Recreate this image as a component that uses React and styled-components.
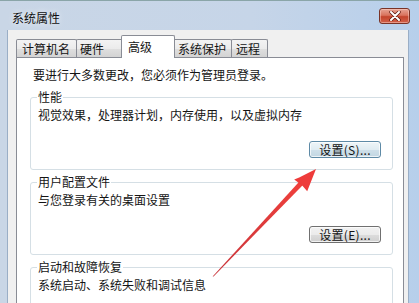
import React from 'react'
import styled, { createGlobalStyle } from 'styled-components'

const GlobalStyle = createGlobalStyle`
  html, body {
    margin: 0;
    padding: 0;
    overflow: hidden;
    background: #c6d5e7;
  }
  * {
    box-sizing: border-box;
  }
`

const FONT = '"Noto Sans CJK SC", "Noto Sans", sans-serif'

const tabs = [
  { label: '计算机名', width: 61, pad: 5 },
  { label: '硬件', width: 48, pad: 3 },
  { label: '高级', width: 54, pad: 6, selected: true },
  { label: '系统保护', width: 59, pad: 4 },
  { label: '远程', width: 37, pad: 4 },
]

const groups = [
  { title: '性能', text: '视觉效果，处理器计划，内存使用，以及虚拟内存', button: '设置(S)...', focused: true },
  { title: '用户配置文件', text: '与您登录有关的桌面设置', button: '设置(E)...' },
  { title: '启动和故障恢复', text: '系统启动、系统失败和调试信息' },
]

const App = () => {
  return (
    <>
      <GlobalStyle />
      <Window>
        <TitleBar>
          <Title>系统属性</Title>
          <CloseButton>
            <svg width='12' height='10' viewBox='0 0 12 10'>
              <path d='M2 1 L10 9 M10 1 L2 9' stroke='#5a1a10' strokeWidth='3.4' strokeLinecap='round' />
              <path d='M2 1 L10 9 M10 1 L2 9' stroke='#ffffff' strokeWidth='2' strokeLinecap='round' />
            </svg>
          </CloseButton>
        </TitleBar>
        <Body>
          <TabRow>
            {tabs.map((t) => (
              <Tab key={t.label} $width={t.width} $pad={t.pad} $selected={t.selected}>
                {t.label}
              </Tab>
            ))}
          </TabRow>
          <Panel>
            <Intro>要进行大多数更改，您必须作为管理员登录。</Intro>
            {groups.map((g) => (
              <Group key={g.title}>
                <Legend>{g.title}</Legend>
                <Desc>{g.text}</Desc>
                {g.button && (
                  <ButtonRow>
                    <Button $focused={g.focused}>{g.button}</Button>
                  </ButtonRow>
                )}
              </Group>
            ))}
          </Panel>
        </Body>
        <ArrowLayer width='419' height='303' viewBox='0 0 419 303'>
          <defs>
            <linearGradient id='arrowFill' x1='0' y1='1' x2='1' y2='0'>
              <stop offset='0' stopColor='#c8343a' />
              <stop offset='1' stopColor='#f0403c' />
            </linearGradient>
          </defs>
          <polygon points='212.6,275.4 213.6,275.6 303.4,183.4 299.6,180.2' fill='url(#arrowFill)' />
          <polygon points='316,168 307.2,190.2 302.2,184.4 294.2,178.6 299.2,176.4' fill='#ee3b3a' />
        </ArrowLayer>
      </Window>
    </>
  )
}

const Window = styled.div`
  position: relative;
  width: 419px;
  height: 303px;
  display: flex;
  flex-direction: column;
  overflow: hidden;
  font-family: ${FONT};
  font-size: 12px;
  color: #141414;
  border-top: 1px solid #8aa5a8;
  background: linear-gradient(to right, #c9d6e6 0%, #c6d5e8 60%, #b7cfeb 100%);
`

const TitleBar = styled.div`
  height: 29px;
  flex: none;
  display: flex;
  align-items: center;
  justify-content: space-between;
  padding: 2px 9px 0 12px;
`

const Title = styled.span`
  line-height: 14px;
  color: #101010;
  text-shadow: 0 0 6px rgba(255, 255, 255, 0.9);
  margin-top: 3px;
`

const CloseButton = styled.div`
  width: 31px;
  height: 16px;
  margin-top: -2px;
  border: 1px solid #7a3326;
  border-radius: 3px;
  display: flex;
  align-items: center;
  justify-content: center;
  background: linear-gradient(#e6a394 0%, #d9735d 45%, #c3442c 55%, #d2614a 100%);
  box-shadow: inset 0 0 0 1px rgba(255, 220, 210, 0.45);
`

const Body = styled.div`
  flex: 1;
  display: flex;
  flex-direction: column;
  margin: 0 10px 0 7px;
  padding: 5px 4px 0 8px;
  background: #f0f0f0;
  border-left: 1px solid #9aaec6;
  border-right: 1px solid #9aaec6;
`

const TabRow = styled.div`
  display: flex;
  align-items: flex-end;
  height: 23px;
  margin-bottom: -1px;
`

const Tab = styled.div`
  width: ${(p) => p.$width}px;
  height: ${(p) => (p.$selected ? 23 : 19)}px;
  margin-left: ${(p) => (p.$selected ? -3 : -1)}px;
  margin-right: ${(p) => (p.$selected ? -1 : 0)}px;
  padding: ${(p) => (p.$selected ? 4 : 2)}px 0 0 ${(p) => p.$pad}px;
  line-height: 14px;
  white-space: nowrap;
  border: 1px solid #898c95;
  border-bottom: none;
  border-radius: 2px 2px 0 0;
  background: ${(p) =>
    p.$selected ? '#ffffff' : 'linear-gradient(#f3f3f3 0%, #ebebeb 50%, #dedede 51%, #d2d2d2 100%)'};
  position: ${(p) => (p.$selected ? 'relative' : 'static')};
  z-index: ${(p) => (p.$selected ? 1 : 'auto')};

  &:first-child {
    margin-left: 0;
  }
`

const Panel = styled.div`
  flex: 1;
  background: #ffffff;
  border: 1px solid #898c95;
  border-bottom: none;
  padding: 8px 10px 0 13px;
`

const Intro = styled.div`
  line-height: 18px;
  padding-left: 3px;
  white-space: nowrap;
`

const Group = styled.fieldset`
  margin: 6px 0 0;
  padding: 0 11px 11px 6px;
  border: 1px solid #d5dfe5;
  border-radius: 3px;
  box-shadow: inset 1px 1px 0 #ffffff;

  & + & {
    margin-top: 5px;
  }
`

const Legend = styled.legend`
  padding: 0 1px;
  line-height: 14px;
  color: #141414;
`

const Desc = styled.div`
  margin-top: 2px;
  padding-left: 1px;
  line-height: 18px;
  white-space: nowrap;
`

const ButtonRow = styled.div`
  display: flex;
  justify-content: flex-end;
  margin-top: 17px;
`

const Button = styled.div`
  width: 72px;
  height: 17px;
  display: flex;
  align-items: center;
  justify-content: center;
  line-height: 14px;
  letter-spacing: 0.3px;
  border: 1px solid ${(p) => (p.$focused ? '#5e8aa6' : '#707070')};
  border-radius: 3px;
  background: ${(p) =>
    p.$focused
      ? 'linear-gradient(#eef5f8 0%, #e0ecf2 50%, #cfe0ea 51%, #c2d6e2 100%)'
      : 'linear-gradient(#f2f2f2 0%, #ebebeb 50%, #dddddd 51%, #cfcfcf 100%)'};
  box-shadow: inset 0 0 0 1px rgba(255, 255, 255, 0.7);
`

const ArrowLayer = styled.svg`
  position: absolute;
  left: 0;
  top: 0;
  pointer-events: none;
`

export default App
